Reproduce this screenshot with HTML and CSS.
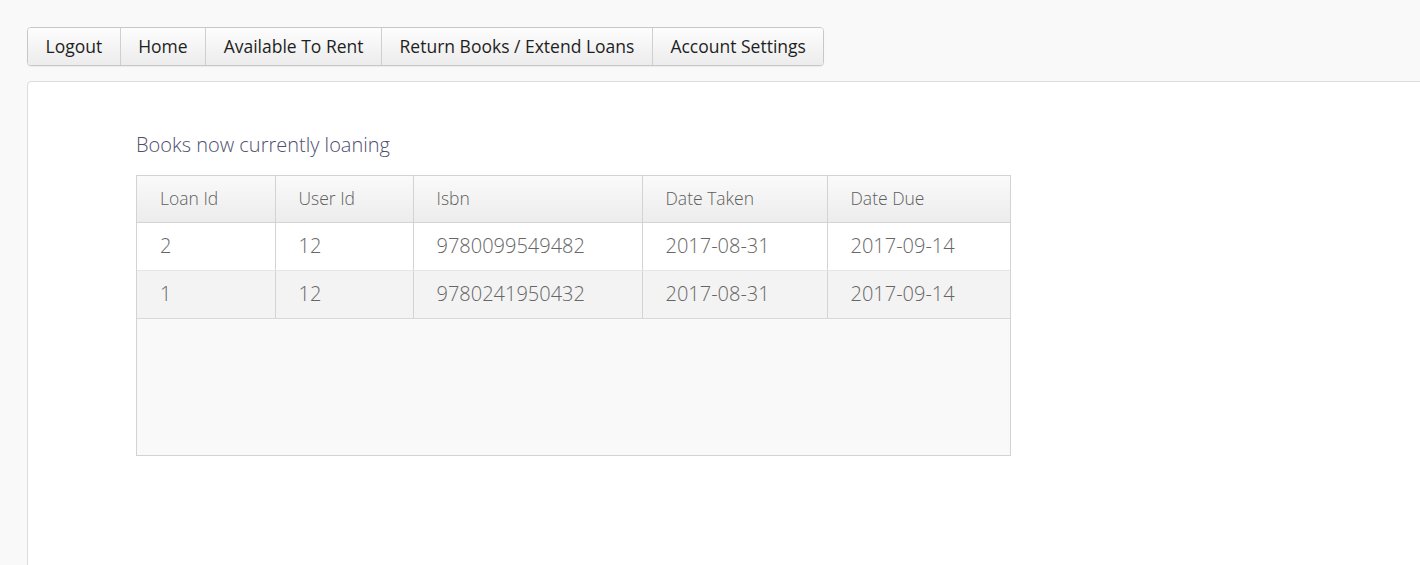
FILE: index.html
```html
<!DOCTYPE html>
<html lang="en">
<head>
<meta charset="utf-8">
<title>Loans</title>
<link rel="stylesheet" href="styles.css">
</head>
<body>
<div class="page">
  <nav class="nav">
    <a class="nav-btn" href="#">Logout</a>
    <a class="nav-btn" href="#">Home</a>
    <a class="nav-btn" href="#">Available To Rent</a>
    <a class="nav-btn" href="#">Return Books / Extend Loans</a>
    <a class="nav-btn" href="#">Account Settings</a>
  </nav>
  <main class="panel">
    <h2 class="title">Books now currently loaning</h2>
    <div class="grid">
      <table class="loans">
        <colgroup>
          <col class="c1"><col class="c2"><col class="c3"><col class="c4"><col class="c5">
        </colgroup>
        <thead>
          <tr><th>Loan Id</th><th>User Id</th><th>Isbn</th><th>Date Taken</th><th>Date Due</th></tr>
        </thead>
        <tbody>
          <tr><td>2</td><td>12</td><td>9780099549482</td><td>2017-08-31</td><td>2017-09-14</td></tr>
          <tr class="alt"><td>1</td><td>12</td><td>9780241950432</td><td>2017-08-31</td><td>2017-09-14</td></tr>
        </tbody>
      </table>
    </div>
  </main>
</div>
</body>
</html>
```
FILE: styles.css
```css
html, body {
  margin: 0;
  padding: 0;
  overflow: hidden;
  background: #f9f9f9;
  font-family: "Open Sans", "Liberation Sans", sans-serif;
}
.page {
  padding: 27px 0 0 27px;
  height: 565px;
  overflow: hidden;
  box-sizing: border-box;
}
.nav {
  display: inline-flex;
  border: 1px solid #c8c8c8;
  border-radius: 4px;
  box-shadow: 0 1px 1px rgba(0,0,0,0.06);
  overflow: hidden;
  height: 37px;
}
.nav-btn {
  display: flex;
  align-items: center;
  padding: 0 17.5px 1px;
  font-size: 17.5px;
  color: #1f1f1f;
  text-decoration: none;
  background: linear-gradient(#fdfdfd, #ececec);
  border-left: 1px solid #cfcfcf;
}
.nav-btn:first-child {
  border-left: none;
}
.panel {
  margin-top: 15px;
  margin-right: -20px;
  height: 600px;
  background: #fff;
  border: 1px solid #dcdcdc;
  border-radius: 4px 0 0 0;
  padding: 49px 0 0 108px;
  box-sizing: border-box;
}
.title {
  margin: 0 0 16px;
  font-size: 20px;
  font-weight: 300;
  color: #4f4f6e;
  line-height: 28px;
}
.grid {
  width: 875px;
  height: 281px;
  box-sizing: border-box;
  border: 1px solid #d3d3d3;
  background: #f9f9f9;
}
.loans {
  width: 873px;
  border-collapse: collapse;
  table-layout: fixed;
}
.c1 { width: 138px; }
.c2 { width: 138px; }
.c3 { width: 229px; }
.c4 { width: 185px; }
.c5 { width: 183px; }
.loans th {
  height: 43px;
  padding: 0 0 3px 23px;
  text-align: left;
  font-size: 17.5px;
  font-weight: 300;
  color: #5e5e5e;
  background: linear-gradient(#fafafa, #ececec);
  border-bottom: 1px solid #d3d3d3;
  border-left: 1px solid #d3d3d3;
}
.loans td {
  height: 45px;
  padding: 0 0 2px 23px;
  font-size: 20px;
  font-weight: 300;
  color: #666;
  background: #fff;
  border-bottom: 1px solid #e6e6e6;
  border-left: 1px solid #d3d3d3;
}
.loans th:first-child, .loans td:first-child {
  border-left: none;
}
.loans tr.alt td {
  background: #f3f3f3;
  border-bottom: 1px solid #d8d8d8;
}
```
